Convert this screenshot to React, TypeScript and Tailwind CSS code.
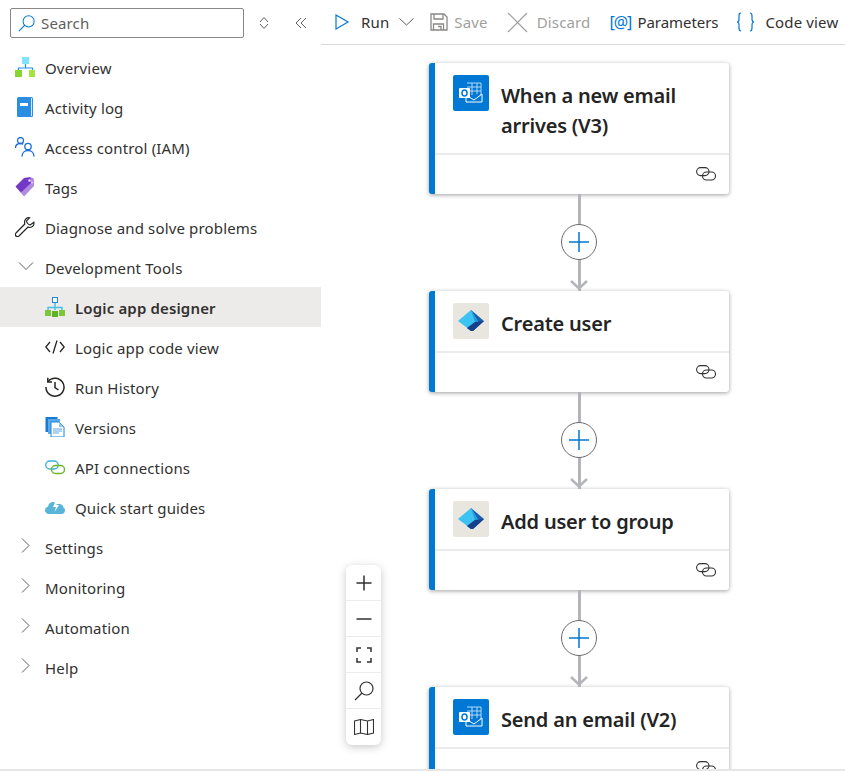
import React from "react";

const font = "font-['Noto_Sans','Open_Sans',sans-serif]";

function OverviewIcon() {
  return (
    <svg width="20" height="20" viewBox="0 0 20 20">
      <rect x="7" y="0" width="7" height="7" fill="#7fe3fb" />
      <path d="M10.5 7v4M3.5 14v-3h14v3" fill="none" stroke="#1b93eb" strokeWidth="1.2" />
      <rect x="0" y="13" width="7" height="7" fill="#86d633" />
      <rect x="14" y="13" width="7" height="7" fill="#a6e33f" />
    </svg>
  );
}

function BookIcon() {
  return (
    <svg width="20" height="20" viewBox="0 0 20 20">
      <rect x="2" y="0" width="16" height="20" rx="1.5" fill="#2a8fe0" />
      <rect x="16" y="1" width="1" height="18" fill="#cfe8fb" />
      <rect x="5" y="6" width="8" height="3" fill="#fff" />
    </svg>
  );
}

function PeopleIcon() {
  return (
    <svg width="20" height="20" viewBox="0 0 20 20" fill="none" stroke="#1a6fd6" strokeWidth="1.3">
      <circle cx="5.5" cy="3.5" r="3" />
      <path d="M0.5 11c0-3 2-4.5 5-4.5 1 0 2 .2 2.7.6" />
      <circle cx="13" cy="9.5" r="3.2" />
      <path d="M7 19.5c0-3.500 2.500-6 6-6s6 2.500 6 6" />
    </svg>
  );
}

function TagIcon() {
  return (
    <svg width="20" height="20" viewBox="0 0 20 20">
      <path d="M1 10 L10 1.500 L17 0.500 L19 2 L19 9 L9 19.500 Z" fill="#b28be0" />
      <path d="M0.500 9.500 L9 1 L15.500 0 L16 6 L6 15.500 Z" fill="#7438c8" />
      <circle cx="14.500" cy="3.500" r="1.300" fill="#e8dcf8" />
      <circle cx="17" cy="5.500" r="1" fill="#e8dcf8" />
    </svg>
  );
}

function WrenchIcon() {
  return (
    <svg width="20" height="20" viewBox="0 0 20 20" fill="none" stroke="#252423" strokeWidth="1.2">
      <path d="M14.500 0.800 L11.800 3.500 C11.500 4 11.600 5 12.300 6 C13 7 14.500 8 15.500 7.800 L18.800 5.200 C19.500 8 17.500 10.500 14.800 10.500 C14 10.500 13.500 10.300 13 10 L4 19 C3 19.800 1.800 19.800 1 19 C0.200 18.200 0.200 17 1 16 L9.800 7 C8.800 3.500 11 0.200 14.500 0.800 Z" />
    </svg>
  );
}

function DesignerIcon() {
  return (
    <svg width="20" height="20" viewBox="0 0 20 20">
      <rect x="7.500" y="0.500" width="5" height="5" fill="#fff" stroke="#1a86dc" />
      <path d="M10 6v4M3 13v-2.500h14V13M10 10v3" fill="none" stroke="#47bde8" strokeWidth="1.400" />
      <rect x="0" y="13" width="6" height="6" fill="#7cc63a" />
      <rect x="7" y="14" width="6" height="6" fill="#5fb324" />
      <rect x="14" y="13" width="6" height="6" fill="#7cc63a" />
    </svg>
  );
}

function CodeIcon() {
  return (
    <svg width="20" height="20" viewBox="0 0 20 20" fill="none" stroke="#252423" strokeWidth="1.300">
      <path d="M5 5 L0.800 10 L5 15M15 5 L19.200 10 L15 15M12 3.500 L8 16.500" />
    </svg>
  );
}

function HistoryIcon() {
  return (
    <svg width="20" height="20" viewBox="0 0 20 20" fill="none" stroke="#252423" strokeWidth="1.500">
      <path d="M3 4.500A9 9 0 1 1 1 10" />
      <path d="M2.800 0.800V5H7" />
      <path d="M10 5v5.500l3.500 2.500" />
    </svg>
  );
}

function VersionsIcon() {
  return (
    <svg width="20" height="20" viewBox="0 0 20 20">
      <rect x="0.500" y="0" width="12" height="15" fill="#1a78d6" />
      <rect x="3" y="2" width="12" height="15" fill="#5aa9ea" />
      <path d="M6 5h8l5 5v10H6z" fill="#fff" stroke="#1a86dc" />
      <path d="M14 5l5 5h-5z" fill="#8cc7f2" />
      <path d="M8 12h9M8 14h9M8 16h6" stroke="#5ba4e4" />
    </svg>
  );
}

function ApiIcon() {
  return (
    <svg width="20" height="20" viewBox="0 0 20 20" fill="none" strokeWidth="1.400">
      <rect x="0.700" y="4" width="12.500" height="8" rx="4" stroke="#3bb4d8" />
      <rect x="6.500" y="8.500" width="13" height="8" rx="4" stroke="#6cb52d" />
    </svg>
  );
}

function CloudIcon() {
  return (
    <svg width="20" height="20" viewBox="0 0 20 20">
      <path d="M4 17C1.500 17 0 15.300 0 13.300C0 11.300 1.500 10 3 9.800C3.300 6.800 5.500 5 8 5C10 5 11.500 6 12.300 7.300C13 7 14 6.800 15 7C17.500 7.500 18.500 9.500 18.300 10.500C19.500 11 20 12 20 13.300C20 15.500 18.500 17 16.500 17Z" fill="#59b4d9" />
      <path d="M11 3 L8 10 H11 L9.500 15 L14 8 H11.300 L13.500 3 Z" fill="#fff" />
    </svg>
  );
}

function SearchIcon({ color = "#0078d4", size = 20 }: { color?: string; size?: number }) {
  return (
    <svg width={size} height={size} viewBox="0 0 20 20" fill="none" stroke={color} strokeWidth="1.200">
      <circle cx="12.500" cy="7.500" r="6.500" />
      <path d="M8 12 L1 19" />
    </svg>
  );
}

function Chevron({ open }: { open?: boolean }) {
  return open ? (
    <svg width="16" height="16" viewBox="0 0 16 16" fill="none" stroke="#605e5c" strokeWidth="1">
      <path d="M1 3.500 L8 10.500 L15 3.500" />
    </svg>
  ) : (
    <svg className="mb-[2px]" width="16" height="16" viewBox="0 0 16 16" fill="none" stroke="#605e5c" strokeWidth="1">
      <path d="M4 0.500 L11 7.500 L4 14.500" />
    </svg>
  );
}

function OutlookIcon() {
  return (
    <div className="w-9 h-9 rounded-[2px] bg-[#0078d4] flex items-center justify-center">
      <svg width="24" height="22" viewBox="0 0 24 22" fill="none">
        <path d="M8 1h14v18H8" stroke="#b5d8f3" strokeWidth="1" />
        <path d="M8 5h14M8 9h14M13 1v12M18 1v11" stroke="#b5d8f3" strokeWidth="1" />
        <path d="M7 13 L15 18 L23 12 V20 H7 Z" fill="#0078d4" stroke="#fff" strokeWidth="1" />
        <rect x="0" y="6" width="11" height="10" rx="1" fill="#fff" />
        <ellipse cx="5.500" cy="11" rx="2.500" ry="3" stroke="#0078d4" strokeWidth="1.500" />
      </svg>
    </div>
  );
}

function EntraIcon() {
  return (
    <div className="w-9 h-9 rounded-[2px] bg-[#e9e6df] flex items-center justify-center">
      <svg width="26" height="22" viewBox="0 0 26 22">
        <path d="M13 0 L26 11 L15 21 L13 14 Z" fill="#1b5fae" />
        <path d="M13 0 L0 11 L8 17 L13 21 L21 13 Z" fill="#3cc3f2" />
        <path d="M13 0 L21 13 L13 21 L9 18 L17 12 Z" fill="#1e9ce0" />
        <path d="M13 21 L9 18 L17 12 L26 11 L15 21 Z" fill="#173f8a" />
      </svg>
    </div>
  );
}

function LinkIcon() {
  return (
    <svg width="20" height="14" viewBox="0 0 20 14" fill="none" stroke="#323130" strokeWidth="1.100">
      <rect x="0.600" y="0.600" width="12.400" height="8" rx="4" />
      <rect x="6.500" y="5" width="13" height="8" rx="4" />
    </svg>
  );
}

function Connector() {
  return (
    <div className="relative w-9 h-[97px] flex flex-col items-center">
      <div className="w-[3px] h-full bg-[#b4b4bb]" />
      <svg className="absolute bottom-[1px] left-[9px]" width="18" height="10" viewBox="0 0 18 10" fill="none" stroke="#b4b4bb" strokeWidth="2.500">
        <path d="M1 1 L9 8.500 L17 1" />
      </svg>
      <div className="absolute left-0 top-[30px] w-9 h-9 rounded-full bg-white border border-[#6b6b6b] flex items-center justify-center">
        <svg width="22" height="22" viewBox="0 0 22 22" stroke="#0078d4" strokeWidth="1.500">
          <path d="M11 1v20M1 11h20" />
        </svg>
      </div>
    </div>
  );
}

function Card({ title, icon }: { title: string; icon: React.ReactNode }) {
  return (
    <div className="shrink-0 w-[300px] bg-white rounded-[3px] border-l-[6px] border-[#0078d4] shadow-[0_1px_4px_rgba(0,0,0,0.38)]">
      <div className="flex pl-[18px] pr-3 py-3 gap-3 border-b-2 border-[#edebe9]">
        <div className="shrink-0">{icon}</div>
        <div className="mt-[6px] text-[20px] leading-[30px] font-semibold tracking-[-0.2px] text-[#242424]">{title}</div>
      </div>
      <div className="h-[39px] flex justify-end items-center pr-[13px] pb-[2px]">
        <LinkIcon />
      </div>
    </div>
  );
}

const topItems = [
  { label: "Overview", icon: <OverviewIcon /> },
  { label: "Activity log", icon: <BookIcon /> },
  { label: "Access control (IAM)", icon: <PeopleIcon /> },
  { label: "Tags", icon: <TagIcon /> },
  { label: "Diagnose and solve problems", icon: <WrenchIcon /> },
];

const devItems = [
  { label: "Logic app designer", icon: <DesignerIcon />, active: true },
  { label: "Logic app code view", icon: <CodeIcon /> },
  { label: "Run History", icon: <HistoryIcon /> },
  { label: "Versions", icon: <VersionsIcon /> },
  { label: "API connections", icon: <ApiIcon /> },
  { label: "Quick start guides", icon: <CloudIcon /> },
];

export default function App() {
  return (
    <div className={`h-[771px] w-[845px] overflow-hidden flex flex-col bg-white text-[#323130] tracking-[0.15px] ${font}`}>
      <div className="flex-1 min-h-0 flex">
        {/* Sidebar */}
        <aside className="w-[321px] shrink-0 pt-2">
          <div className="flex items-center pl-[10px] h-[30px] mb-[9px]">
            <div className="w-[234px] h-[30px] rounded-[2px] border border-[#8a8886] flex items-center pl-[7px] gap-[6px] text-[15px] text-[#605e5c]">
              <SearchIcon size={17} />
              Search
            </div>
            <svg className="ml-[14px]" width="12" height="14" viewBox="0 0 12 14" fill="none" stroke="#605e5c">
              <path d="M6 1.500 L10 6 M6 1.500 L2 6 M2 8 L6 12.500 L10 8" />
            </svg>
            <svg className="ml-[25px]" width="12" height="12" viewBox="0 0 12 12" fill="none" stroke="#605e5c">
              <path d="M6 1 L1 6 L6 11 M11 1 L6 6 L11 11" />
            </svg>
          </div>
          {topItems.map((item) => (
            <div key={item.label} className="h-10 flex items-center pl-[15px] gap-[10px] text-[15px]">
              {item.icon}
              <span className="pt-[2px]">{item.label}</span>
            </div>
          ))}
          <div className="h-10 flex items-center pl-[18px] gap-[11px] text-[15px]">
            <Chevron open />
            <span className="pt-[2px]">Development Tools</span>
          </div>
          {devItems.map((item) => (
            <div
              key={item.label}
              className={`h-10 flex items-center pl-[45px] gap-[10px] text-[15px] ${item.active ? "bg-[#edebe9] font-semibold" : ""}`}
            >
              {item.icon}
              <span className="pt-[2px]">{item.label}</span>
            </div>
          ))}
          {["Settings", "Monitoring", "Automation", "Help"].map((label) => (
            <div key={label} className="h-10 flex items-center pl-[18px] gap-[11px] text-[15px]">
              <Chevron />
              <span className="pt-[2px]">{label}</span>
            </div>
          ))}
        </aside>

        {/* Designer */}
        <main className="flex-1 min-w-0 flex flex-col">
          <div className="h-[45px] shrink-0 border-b border-[#d9d9d9] flex items-center pl-[13px] text-[15px] whitespace-nowrap">
            <svg width="16" height="20" viewBox="0 0 16 20" fill="none" stroke="#0078d4" strokeWidth="1.200">
              <path d="M2 3 L14 10 L2 17 Z" />
            </svg>
            <span className="ml-[11px]">Run</span>
            <svg className="ml-[10px]" width="15" height="10" viewBox="0 0 15 10" fill="none" stroke="#605e5c">
              <path d="M0.500 1.500 L7.500 8 L14.500 1.500" />
            </svg>
            <svg className="ml-[16px]" width="18" height="18" viewBox="0 0 18 18" fill="none" stroke="#8a8886" strokeWidth="1.300">
              <path d="M1 1h13l3 3v13H1z" />
              <path d="M4 1v5h9V1M3.500 17v-6h10v6M8 13.500h3v3.500" />
            </svg>
            <span className="ml-[6px] text-[#a19f9d]">Save</span>
            <svg className="ml-[19px]" width="21" height="21" viewBox="0 0 21 21" fill="none" stroke="#a19f9d" strokeWidth="1.200">
              <path d="M1 1 L20 20 M20 1 L1 20" />
            </svg>
            <span className="ml-[9px] text-[#a19f9d]">Discard</span>
            <span className="ml-[19px] text-[16px] text-[#0078d4] tracking-[-1px]">[@]</span>
            <span className="ml-[6px] tracking-[-0.05px]">Parameters</span>
            <svg className="ml-[18px]" width="19" height="20" viewBox="0 0 19 20" fill="none" stroke="#0078d4" strokeWidth="1.200">
              <path d="M5 1C3 1 3 2 3 4V7C3 9 2.500 10 1 10C2.500 10 3 11 3 13V16C3 18 3 19 5 19M14 1C16 1 16 2 16 4V7C16 9 16.500 10 18 10C16.500 10 16 11 16 13V16C16 18 16 19 14 19" />
            </svg>
            <span className="ml-[10px]">Code view</span>
          </div>

          <div className="relative flex-1 min-h-0 overflow-hidden">
            <div className="flex flex-col items-center pt-[18px] w-[516px]">
              <Card title="When a new email arrives (V3)" icon={<OutlookIcon />} />
              <Connector />
              <Card title="Create user" icon={<EntraIcon />} />
              <Connector />
              <Card title="Add user to group" icon={<EntraIcon />} />
              <Connector />
              <Card title="Send an email (V2)" icon={<OutlookIcon />} />
            </div>

            {/* Zoom controls */}
            <div className="absolute left-[25px] top-[520px] w-[35px] rounded-[6px] bg-white shadow-[0_2px_8px_rgba(0,0,0,0.22)] flex flex-col divide-y divide-[#ebebeb]">
              <div className="h-9 flex items-center justify-center">
                <svg width="16" height="16" viewBox="0 0 16 16" stroke="#323130" strokeWidth="1.500"><path d="M8 0.500v15M0.500 8h15" /></svg>
              </div>
              <div className="h-9 flex items-center justify-center">
                <svg width="16" height="16" viewBox="0 0 16 16" stroke="#323130" strokeWidth="1.500"><path d="M0.500 8h15" /></svg>
              </div>
              <div className="h-9 flex items-center justify-center">
                <svg width="16" height="16" viewBox="0 0 16 16" fill="none" stroke="#323130" strokeWidth="1.500"><path d="M1 5V1h4M11 1h4v4M15 11v4h-4M5 15H1v-4" /></svg>
              </div>
              <div className="h-9 flex items-center justify-center">
                <SearchIcon color="#323130" />
              </div>
              <div className="h-9 flex items-center justify-center">
                <svg width="20" height="16" viewBox="0 0 20 16" fill="none" stroke="#323130" strokeWidth="1.100">
                  <path d="M0.500 2 L6.500 0.500 L13.500 2 L19.500 0.500 V14 L13.500 15.500 L6.500 14 L0.500 15.500 Z M6.500 0.500 V14 M13.500 2 V15.500" />
                </svg>
              </div>
            </div>
          </div>
        </main>
      </div>
      <div className="h-[2px] shrink-0 bg-[#e6e6e6]" />
    </div>
  );
}
